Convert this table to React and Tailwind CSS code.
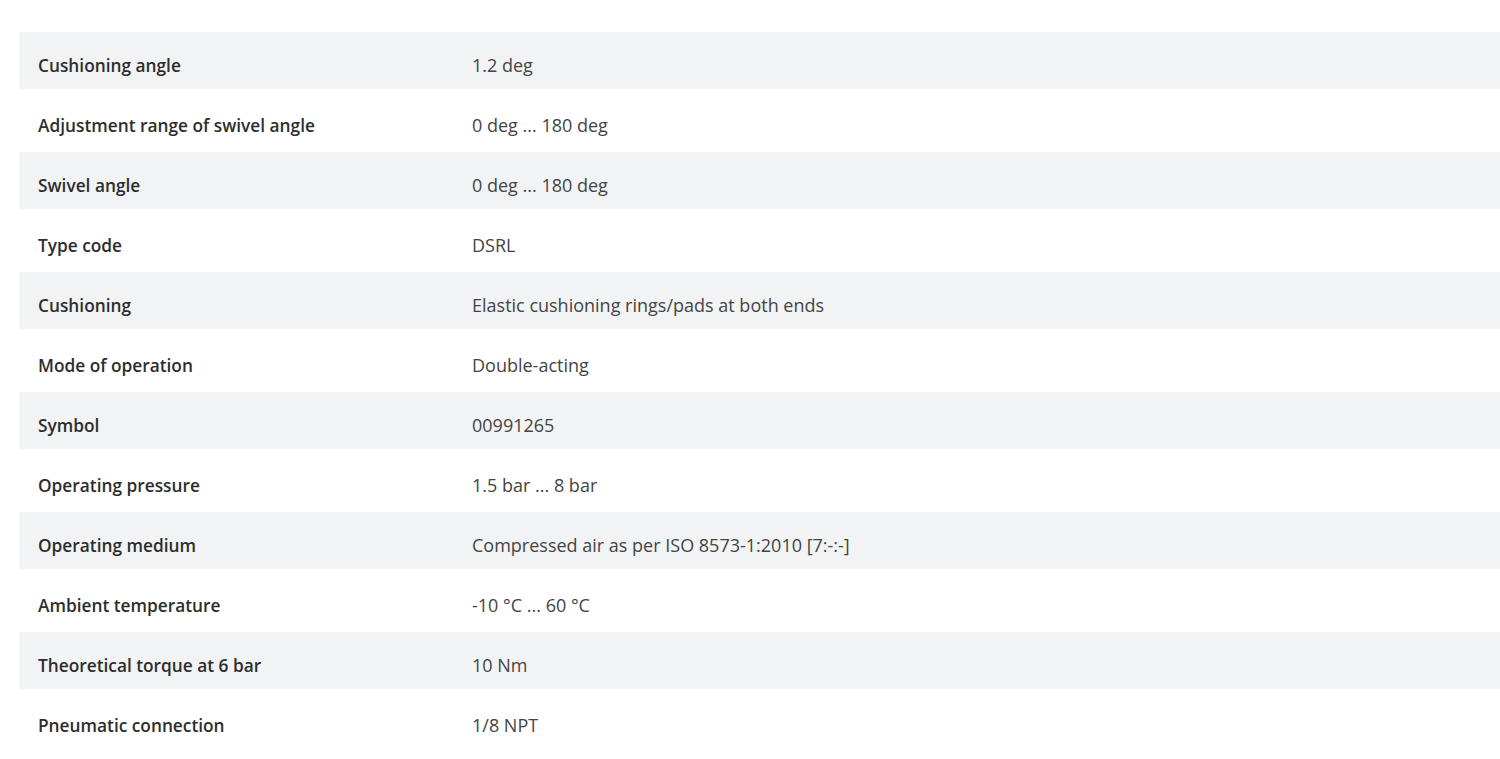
import React from "react";

const rows = [
  ["Cushioning angle", "1.2 deg"],
  ["Adjustment range of swivel angle", "0 deg ... 180 deg"],
  ["Swivel angle", "0 deg ... 180 deg"],
  ["Type code", "DSRL"],
  ["Cushioning", "Elastic cushioning rings/pads at both ends"],
  ["Mode of operation", "Double-acting"],
  ["Symbol", "00991265"],
  ["Operating pressure", "1.5 bar ... 8 bar"],
  ["Operating medium", "Compressed air as per ISO 8573-1:2010 [7:-:-]"],
  ["Ambient temperature", "-10 °C ... 60 °C"],
  ["Theoretical torque at 6 bar", "10 Nm"],
  ["Pneumatic connection", "1/8 NPT"],
];

export default function App() {
  return (
    <div className="min-h-[759px] w-[1500px] bg-white pt-[32px] pl-[19px] font-['Open_Sans',sans-serif] text-[18px] leading-[24px]">
      {rows.map(([k, v], i) => (
        <div
          key={k}
          className={
            i % 2 === 0
              ? "flex h-[57px] items-center bg-[#f2f3f5] pt-[9px]"
              : "flex h-[63px] items-center bg-white pt-[9px]"
          }
        >
          <div className="w-[453px] shrink-0 pl-[19px] pt-[2px] text-[17.3px] font-semibold text-[#2d2d2d]">{k}</div>
          <div className="text-[#444444]">{v}</div>
        </div>
      ))}
    </div>
  );
}
